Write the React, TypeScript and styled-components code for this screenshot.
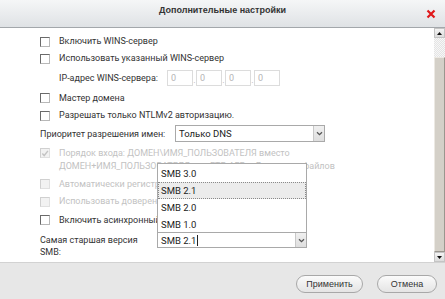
import React from "react";
import styled, { createGlobalStyle } from "styled-components";

const GlobalStyle = createGlobalStyle`
  html, body { margin: 0; padding: 0; background: #fff; }
  body { font-family: Roboto, "Noto Sans", sans-serif; }
  * { box-sizing: border-box; }
`;

const Dialog = styled.div`
  width: 445px;
  height: 299px;
  display: flex;
  flex-direction: column;
  overflow: hidden;
  background: #fff;
`;

const TitleBar = styled.div`
  height: 28px;
  flex: none;
  position: relative;
  display: flex;
  justify-content: center;
  padding-top: 5px;
  background: linear-gradient(#f5f6f7, #dfe2e5);
  border-bottom: 1px solid #a3a7ab;
`;

const Title = styled.div`
  font-family: "Liberation Sans", Arial, sans-serif;
  font-weight: bold;
  font-size: 9px;
  color: #333;
`;

const Close = styled.div`
  position: absolute;
  right: 9px;
  top: 4px;
  width: 10px;
  height: 10px;
`;

const Body = styled.div`
  flex: 1;
  display: flex;
  min-height: 0;
`;

const Content = styled.div`
  flex: 1;
  position: relative;
  padding: 5px 0 0 40px;
  display: flex;
  flex-direction: column;
  font-size: 9px;
  color: #333;
`;

const Row = styled.div<{ $h: number; $top?: boolean }>`
  height: ${(p) => p.$h}px;
  display: flex;
  align-items: ${(p) => (p.$top ? "flex-start" : "center")};
  white-space: nowrap;
`;

const Box = styled.span<{ $disabled?: boolean }>`
  width: 10px;
  height: 10px;
  flex: none;
  margin-right: 9px;
  border: 1px solid ${(p) => (p.$disabled ? "#d0d0d0" : "#6a6a6a")};
  border-right-color: ${(p) => (p.$disabled ? "#e0e0e0" : "#b8b8b8")};
  border-bottom-color: ${(p) => (p.$disabled ? "#e0e0e0" : "#b8b8b8")};
  background: ${(p) => (p.$disabled ? "#f2f2f2" : "#fff")};
  display: flex;
  align-items: center;
  justify-content: center;
`;

const Label = styled.span<{ $disabled?: boolean }>`
  color: ${(p) => (p.$disabled ? "#c2c2c2" : "#333")};
  line-height: 13px;
`;

const Indent = styled.div`
  padding-left: 19px;
  display: flex;
  align-items: center;
`;

const IpLabel = styled.span`
  width: 108px;
`;

const IpBox = styled.div`
  width: 26px;
  height: 16px;
  border: 1px solid #dcdcdc;
  color: #b5b5b5;
  padding: 2px 0 0 3px;
  font-size: 9px;
`;

const Dot = styled.span`
  width: 3px;
  color: #b5b5b5;
  text-align: center;
  padding-top: 3px;
`;

const FieldLabel = styled.span`
  width: 135px;
`;

const Select = styled.div<{ $w: number; $h: number }>`
  width: ${(p) => p.$w}px;
  height: ${(p) => p.$h}px;
  border: 1px solid #a9a9a9;
  display: flex;
  align-items: stretch;
  background: #fff;
`;

const SelectText = styled.div`
  flex: 1;
  display: flex;
  align-items: center;
  padding-left: 3px;
  color: #222;
  font-size: 9.5px;
`;

const Caret = styled.span`
  width: 1px;
  height: 11px;
  background: #222;
  margin-left: 1px;
`;

const Arrow = styled.div`
  width: 11px;
  background: linear-gradient(#f0f0f0, #dedede);
  border-left: 1px solid #c8c8c8;
  display: flex;
  align-items: center;
  justify-content: center;
`;

const SmbLabel = styled.div`
  width: 117px;
  line-height: 12px;
  white-space: normal;
  padding-top: 4px;
`;

const List = styled.div`
  position: absolute;
  left: 157px;
  top: 135px;
  width: 150px;
  height: 69px;
  border: 1px solid #a9a9a9;
  border-bottom: none;
  background: #fff;
  padding-top: 1px;
`;

const Item = styled.div<{ $active?: boolean }>`
  height: 17px;
  display: flex;
  align-items: center;
  padding-left: 2px;
  font-size: 9.5px;
  color: #222;
  background: ${(p) => (p.$active ? "#ececec" : "transparent")};
  border: 1px dotted ${(p) => (p.$active ? "#8a8a8a" : "transparent")};
`;

const Scrollbar = styled.div`
  width: 11px;
  flex: none;
  display: flex;
  flex-direction: column;
  background: #fff;
`;

const ScrollBtn = styled.div`
  height: 10px;
  flex: none;
  background: linear-gradient(#f4f4f4, #dcdcdc);
  border: 1px solid #c4c4c4;
  display: flex;
  align-items: center;
  justify-content: center;
`;

const Track = styled.div`
  height: 19px;
  flex: none;
  background-color: #f3f3f3;
  background-image: repeating-conic-gradient(#e4e4e4 0 25%, #f7f7f7 0 50%);
  background-size: 2px 2px;
`;

const Thumb = styled.div`
  flex: 1;
  background: #d4d0c8;
  border-left: 1px solid #ece9e3;
  border-top: 1px solid #ece9e3;
  border-right: 1px solid #9a968e;
  border-bottom: 1px solid #9a968e;
`;

const Footer = styled.div`
  height: 37px;
  flex: none;
  background: #e7e7e7;
  border-top: 1px solid #d2d2d2;
  display: flex;
  justify-content: flex-end;
  align-items: flex-start;
  padding: 12px 8px 0 0;
  gap: 14px;
`;

const Button = styled.div<{ $w: number }>`
  width: ${(p) => p.$w}px;
  height: 18px;
  border: 1px solid #a8a8a8;
  border-radius: 9px;
  background: linear-gradient(#fbfbfb, #e4e4e4);
  font-family: "Liberation Sans", Arial, sans-serif;
  font-size: 9px;
  color: #333;
  display: flex;
  align-items: center;
  justify-content: center;
`;

const Chevron = () => (
  <svg width="7" height="5" viewBox="0 0 7 5">
    <path d="M1 1.2 L3.5 3.6 L6 1.2" stroke="#555" strokeWidth="1.3" fill="none" />
  </svg>
);

const Check = () => (
  <svg width="9" height="9" viewBox="0 0 9 9">
    <path d="M1.5 4.5 L3.6 6.8 L7.8 1.5" stroke="#c4c4c4" strokeWidth="1.6" fill="none" />
  </svg>
);

const Tri = ({ down }: { down?: boolean }) => (
  <svg width="5" height="3" viewBox="0 0 5 3">
    <path d={down ? "M0 0 L5 0 L2.5 3 Z" : "M0 3 L5 3 L2.5 0 Z"} fill="#111" />
  </svg>
);

const Cb = ({ label, disabled, checked }: { label: string; disabled?: boolean; checked?: boolean }) => (
  <Row $h={17}>
    <Box $disabled={disabled}>{checked && <Check />}</Box>
    <Label $disabled={disabled}>{label}</Label>
  </Row>
);

export default function App() {
  return (
    <>
      <GlobalStyle />
      <Dialog>
        <TitleBar>
          <Title>Дополнительные настройки</Title>
          <Close>
            <svg width="10" height="10" viewBox="0 0 10 10">
              <path d="M1.5 1.5 L8.5 8.5 M8.5 1.5 L1.5 8.5" stroke="#e0191b" strokeWidth="2.2" />
            </svg>
          </Close>
        </TitleBar>
        <Body>
          <Content>
            <Cb label="Включить WINS-сервер" />
            <Cb label="Использовать указанный WINS-сервер" />
            <Row $h={22}>
              <Indent>
                <IpLabel>IP-адрес WINS-сервера:</IpLabel>
                <IpBox>0</IpBox>
                <Dot>.</Dot>
                <IpBox>0</IpBox>
                <Dot>.</Dot>
                <IpBox>0</IpBox>
                <Dot>.</Dot>
                <IpBox>0</IpBox>
              </Indent>
            </Row>
            <Row $h={18}>
              <Box />
              <Label>Мастер домена</Label>
            </Row>
            <Cb label="Разрешать только NTLMv2 авторизацию." />
            <Row $h={19}>
              <FieldLabel>Приоритет разрешения имен:</FieldLabel>
              <Select $w={150} $h={17}>
                <SelectText>Только DNS</SelectText>
                <Arrow>
                  <Chevron />
                </Arrow>
              </Select>
            </Row>
            <Row $h={32} $top>
              <Box $disabled style={{ marginTop: 5 }}>
                <Check />
              </Box>
              <Label $disabled style={{ paddingTop: 4 }}>
                Порядок входа: ДОМЕН\ИМЯ_ПОЛЬЗОВАТЕЛЯ вместо
                <br />
                ДОМЕН+ИМЯ_ПОЛЬЗОВАТЕЛЯ для FTP, AFP и Диспетчер файлов
              </Label>
            </Row>
            <Row $h={18}>
              <Box $disabled />
              <Label $disabled>Автоматически регистрировать в DNS</Label>
            </Row>
            <Cb disabled label="Использовать доверенные домены" />
            <Row $h={20}>
              <Box />
              <Label>Включить асинхронный ввод-вывод</Label>
            </Row>
            <Row $h={30} $top>
              <SmbLabel>Самая старшая версия SMB:</SmbLabel>
              <div style={{ paddingTop: 2 }}>
                <Select $w={150} $h={16}>
                  <SelectText>
                    SMB 2.1
                    <Caret />
                  </SelectText>
                  <Arrow>
                    <Chevron />
                  </Arrow>
                </Select>
              </div>
            </Row>
            <List>
              <Item>SMB 3.0</Item>
              <Item $active>SMB 2.1</Item>
              <Item>SMB 2.0</Item>
              <Item>SMB 1.0</Item>
            </List>
          </Content>
          <Scrollbar>
            <ScrollBtn>
              <Tri />
            </ScrollBtn>
            <Track />
            <Thumb />
            <ScrollBtn>
              <Tri down />
            </ScrollBtn>
          </Scrollbar>
        </Body>
        <Footer>
          <Button $w={67}>Применить</Button>
          <Button $w={60}>Отмена</Button>
        </Footer>
      </Dialog>
    </>
  );
}
